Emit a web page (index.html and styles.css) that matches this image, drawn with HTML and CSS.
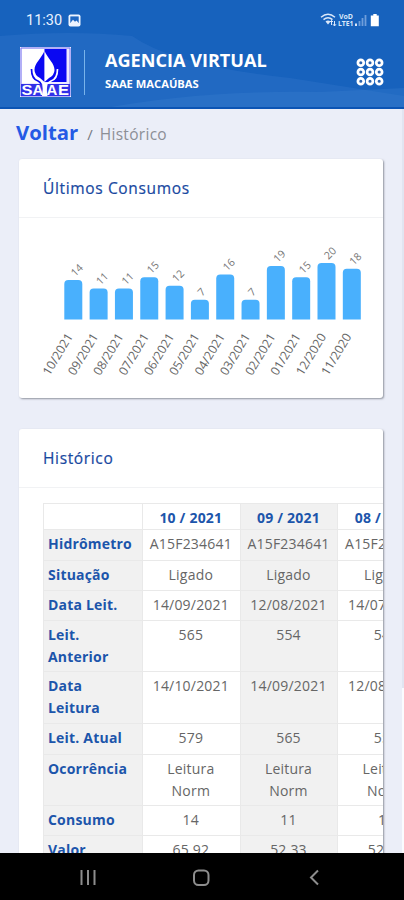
FILE: index.html
```
<!DOCTYPE html>
<html lang="pt-BR">
<head>
<meta charset="utf-8">
<title>Agencia Virtual</title>
<link rel="stylesheet" href="styles.css">
</head>
<body>
<div class="screen">
  <header class="header">
    <svg class="waves" viewBox="0 0 404 109" preserveAspectRatio="none">
      <path d="M0 36Q70 30 132 36Q175 66 290 78L404 96V109H0Z" fill="#2a70c6" opacity=".55"/>
      <path d="M100 109Q200 90 320 92L404 88V109Z" fill="#3b80d0" opacity=".3"/>
      <path d="M0 108H404" stroke="#0b54b4" stroke-width="2"/>
    </svg>
    <div class="status">
      <span class="clock">11:30</span>
      <svg class="photo" width="13" height="13" viewBox="0 0 13 13"><rect x=".5" y=".5" width="12" height="12" rx="2" fill="#eef4ff"/><rect x="2.3" y="2.4" width="8.4" height="6.6" fill="#1d66c2"/><path d="M2.3 9L5 5.7L7 7.7L8.5 6.4L10.7 9Z" fill="#eef4ff"/></svg>
      <svg class="signals" width="62" height="15" viewBox="0 0 62 15">
        <g fill="none" stroke="#dbe8fa" stroke-width="1.4"><path d="M1 4.2Q8-1.8 15 4.2"/><path d="M3.5 6.6Q8 2.8 12.5 6.6"/></g>
        <path d="M5.5 8.4Q8 6.5 10.5 8.4L8 11.5Z" fill="#dbe8fa"/>
        <path d="M11.5 12V7.5M10 9L11.5 7.5L13 9M14.5 8V13M13 11.2L14.5 13L16 11.2" fill="none" stroke="#dbe8fa"/>
        <text x="19" y="6.3" class="net" textLength="14" lengthAdjust="spacingAndGlyphs">VoD</text><text x="18" y="13" class="net" textLength="15.5" lengthAdjust="spacingAndGlyphs">LTE1</text>
        <path d="M36 10.5V13" stroke="#dbe8fa" stroke-width="2"/><path d="M39.500 8V13M42.500 5V13M45.500 2V13" stroke="#6f9edb" stroke-width="1.800"/>
        <path d="M53.300 1h3.400v1.400h2.100v10.800h-8V2.400h2.500z" fill="#fff"/>
      </svg>
    </div>
    <div class="brand">
      <svg class="logo" width="51" height="50" viewBox="0 0 51 50">
        <rect width="51" height="50" fill="#eeeaff"/>
        <path d="M1 1H50V49H1Z" fill="none" stroke="#7775ee"/>
        <path d="M2 2H24.500V36H2Z" fill="#fff"/>
        <path d="M24.500 2H46.500V35H24.500Z" fill="#0a08f2"/>
        <path d="M24.500 4C21 12 14.500 16 14.500 23Q14.500 28 20 31L24.500 35Z" fill="#0a08f2"/>
        <path d="M24.500 4C28 12 34.500 16 34.500 23Q34.500 28 29 31L24.500 35Z" fill="#fff"/>
        <path d="M11.500 22Q11.500 32 18 34Q22.500 36 22.500 45" fill="none" stroke="#0a08f2" stroke-width="1.700"/>
        <path d="M37.500 22Q37.500 32 31 34Q26.500 36 26 45" fill="none" stroke="#fff" stroke-width="1.700"/>
        <rect x="1" y="37" width="49" height="12" fill="#3230e8"/>
        <path d="M22 49Q23.500 42 22 36H28Q26 42 27.500 49Z" fill="#fff"/>
        <g class="saae"><text x="1.500" y="48" textLength="11" lengthAdjust="spacingAndGlyphs">S</text><text x="12.500" y="48">A</text><text x="26.500" y="48">A</text><text x="38" y="48" textLength="11" lengthAdjust="spacingAndGlyphs">E</text></g>
      </svg>
      <div class="rule"></div>
      <div class="titles"><div class="title">AGENCIA VIRTUAL</div><div class="subtitle">SAAE MACAÚBAS</div></div>
      <svg class="grid" width="28" height="28" viewBox="0 0 28 28" fill="#2a62ae" stroke="#fff" stroke-width="2.700">
        <circle cx="4.800" cy="4.800" r="2.900"/><circle cx="14" cy="4.800" r="2.900"/><circle cx="23.200" cy="4.800" r="2.900"/>
        <circle cx="4.800" cy="14" r="2.900"/><circle cx="14" cy="14" r="2.900"/><circle cx="23.200" cy="14" r="2.900"/>
        <circle cx="4.800" cy="23.200" r="2.900"/><circle cx="14" cy="23.200" r="2.900"/><circle cx="23.200" cy="23.200" r="2.900"/>
      </svg>
    </div>
  </header>
  <main class="content">
    <nav class="crumbs"><a class="back">Voltar</a><span class="slash">/</span><span class="here">Histórico</span></nav>
    <section class="card usage">
      <h2>Últimos Consumos</h2>
      <svg class="chart" width="364" height="178" viewBox="19 219 364 178"></svg>
    </section>
    <section class="card history">
      <h2>Histórico</h2>
      <div class="scroller">
        <table>
          <colgroup><col class="c0"><col><col><col></colgroup>
          <tr class="head"><th></th><th>10 / 2021</th><th>09 / 2021</th><th>08 / 2021</th></tr>
          <tr class="r31"><th>Hidrômetro</th><td>A15F234641</td><td>A15F234641</td><td>A15F234641</td></tr>
          <tr class="r30"><th>Situação</th><td>Ligado</td><td>Ligado</td><td>Ligado</td></tr>
          <tr class="r30"><th>Data Leit.</th><td>14/09/2021</td><td>12/08/2021</td><td>14/07/2021</td></tr>
          <tr class="r51"><th>Leit.<br>Anterior</th><td>565</td><td>554</td><td>543</td></tr>
          <tr class="r52"><th>Data<br>Leitura</th><td>14/10/2021</td><td>14/09/2021</td><td>12/08/2021</td></tr>
          <tr class="r31"><th>Leit. Atual</th><td>579</td><td>565</td><td>554</td></tr>
          <tr class="r51"><th>Ocorrência</th><td>Leitura<br>Norm</td><td>Leitura<br>Norm</td><td>Leitura<br>Norm</td></tr>
          <tr class="r30"><th>Consumo</th><td>14</td><td>11</td><td>11</td></tr>
          <tr class="r31"><th>Valor</th><td>65,92</td><td>52,33</td><td>52,33</td></tr>
        </table>
      </div>
    </section>
    <div class="scrollbar"></div>
  </main>
  <footer class="navbar">
    <svg width="404" height="47" viewBox="0 0 404 47" fill="none" stroke="#8d8d8d" stroke-width="2">
      <path d="M81.500 17V32M88 17V32M94.500 17V32"/>
      <rect x="194" y="17.500" width="14.500" height="14.500" rx="4.500"/>
      <path d="M318 17.500L311 24.500L318 31.500"/>
    </svg>
  </footer>
</div>
<script src="chart.js"></script>
</body>
</html>
```
FILE: styles.css
```
* { box-sizing: border-box; }
body { margin: 0; font-family: "Open Sans", sans-serif; background: #ebeef8; }
.screen { width: 404px; height: 900px; overflow: hidden; display: flex; flex-direction: column; }
.header { position: relative; height: 109px; flex: none; background: #1762bd; color: #fff; }
.waves { position: absolute; inset: 0; width: 404px; height: 109px; }
.status { position: relative; display: flex; align-items: center; height: 20px; padding: 0 22px 0 26px; margin-top: 10px; }
.header::before { content: ""; display: table; }
.clock { font: 400 14.5px/20px Roboto, sans-serif; width: 37px; margin-right: 5px; color: #eaf2ff; padding-top: 1px; }
.signals { margin-left: auto; margin-top: 1px; }
.net { font: 700 6.5px "Open Sans", sans-serif; fill: #dbe8fa; }
.brand { position: relative; display: flex; align-items: center; margin-top: 17px; padding: 0 20px; height: 50px; }
.logo { flex: none; }
.saae { font: 700 15px "Liberation Sans", sans-serif; fill: #fff; }
.rule { width: 1px; height: 45px; background: #78b3eb; margin-left: 13px; }
.titles { margin-left: 20px; margin-top: -5px; }
.title { font-size: 18.1px; line-height: 24px; font-weight: 700; white-space: nowrap; }
.subtitle { font-size: 11.2px; line-height: 15px; font-weight: 700; margin-top: 4px; white-space: nowrap; }
.grid { margin-left: auto; }
.content { position: relative; flex: 1; min-height: 0; overflow: hidden; padding: 0 21px 0 19px; }
.crumbs { display: flex; align-items: baseline; height: 50px; margin-left: -3px; padding-top: 9px; line-height: 28px; }
.back { font-size: 20.3px; font-weight: 700; color: #245ae5; }
.slash { margin-left: 9px; font-size: 15px; color: #777b84; }
.here { margin-left: 7px; font-size: 15.5px; color: #8c8f96; letter-spacing: .3px; }
.card { background: #fff; border-radius: 3px; box-shadow: 1px 1px 2px rgba(70, 74, 85, .55); overflow: hidden; }
.usage { height: 239px; }
.history { height: 480px; margin-top: 31px; }
h2 { margin: 0; height: 59px; padding: 0 24px; font-size: 15.5px; line-height: 59px; font-weight: 400; letter-spacing: .65px; color: #18489f; border-bottom: 1px solid #f1f2f4; -webkit-text-stroke: .2px #18489f; }
.chart { display: block; }
.bar { fill: #49b0fd; }
.value { font-size: 10.5px; fill: #777; }
.month { font-size: 12.2px; fill: #666; text-anchor: end; }
.scroller { margin: 15px 0 0 24px; overflow: hidden; }
table { width: 393px; table-layout: fixed; border-collapse: collapse; font-size: 14px; line-height: 22px; color: #666; }
.c0 { width: 99px; }
th, td { padding: 3px 1px 0 0; border: 1px solid #e9e9e9; text-align: center; vertical-align: top; letter-spacing: .2px; white-space: nowrap; }
th { color: #1c55ab; font-weight: 700; }
th:first-child { padding-left: 4px; text-align: left; background: #f1f1f1; }
.head th:first-child { background: #fff; }
th:nth-child(3), td:nth-child(3) { background: #f1f1f1; }
.head { height: 26px; }
.r30 { height: 30px; }
.r31 { height: 31px; }
.r51 { height: 51px; }
.r52 { height: 52px; }
.scrollbar { position: absolute; right: 0; top: 0; width: 2px; height: 744px; background: linear-gradient(#e1e5f1 579px, #fafbfe 579px); }
.navbar { flex: none; height: 47px; background: #000; }
.navbar svg { display: block; }
```
FILE: chart.js
```
const readings = [["10/2021", 14], ["09/2021", 11], ["08/2021", 11], ["07/2021", 15], ["06/2021", 12], ["05/2021", 7], ["04/2021", 16], ["03/2021", 7], ["02/2021", 19], ["01/2021", 15], ["12/2020", 20], ["11/2020", 18]];
const baseline = 320.5;
document.querySelector(".chart").innerHTML = readings.map(([month, value], i) => {
  const x = 64.3 + i * 25.32;
  const top = baseline - value * 2.82;
  return `<path class="bar" d="M${x} ${baseline}V${top + 4}q0-4 4-4h10q4 0 4 4V${baseline}z"/>
    <text class="value" transform="translate(${x + 11} ${top - 3}) rotate(-45)">${value}</text>
    <text class="month" transform="translate(${x + 9} ${baseline + 17}) rotate(-59)">${month}</text>`;
}).join("");
```
